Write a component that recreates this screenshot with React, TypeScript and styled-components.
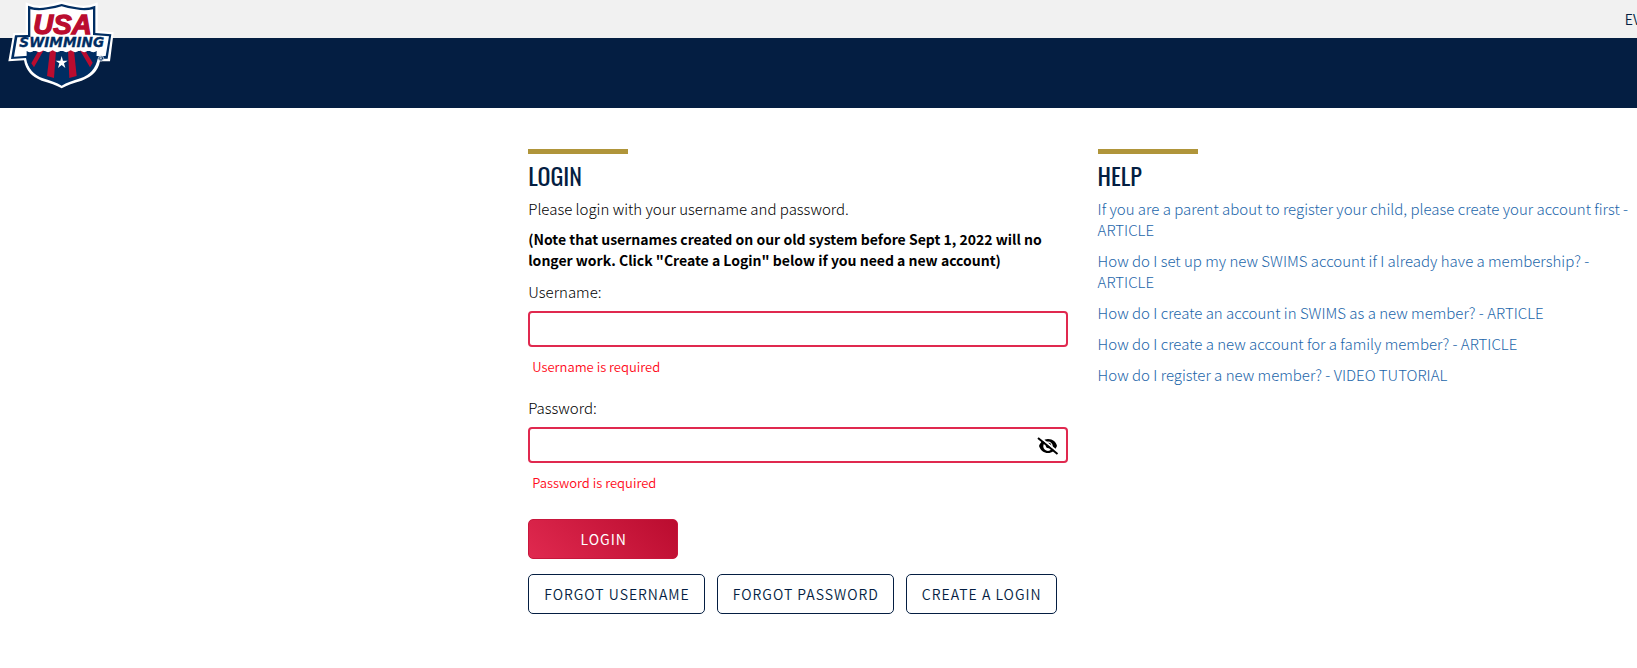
import React, { useState } from "react";
import styled, { createGlobalStyle } from "styled-components";

const navy = "#041e42";
const gold = "#b0953a";
const crimson = "#e0294f";

const GlobalStyle = createGlobalStyle`
  *, *::before, *::after { box-sizing: border-box; }
  body {
    margin: 0;
    background: #fff;
    color: #000;
    font-family: "Source Sans Pro", "Noto Sans CJK SC", sans-serif;
    font-size: 15px;
    font-weight: 300;
    line-height: 21px;
  }
`;

const Header = styled.header`
  position: relative;
`;

const TopBar = styled.div`
  display: flex;
  align-items: center;
  justify-content: flex-end;
  height: 38px;
  overflow: hidden;
  background: #f1f1f1;
`;

const TopLink = styled.a`
  margin-right: -4px;
  color: ${navy};
  font-size: 14px;
  font-weight: 350;
  white-space: nowrap;
  text-decoration: none;
`;

const NavBar = styled.div`
  height: 70px;
  background: ${navy};
`;

const LogoLink = styled.a`
  position: absolute;
  top: 1px;
  left: 8px;
  line-height: 0;
`;

const Main = styled.main`
  display: grid;
  grid-template-columns: minmax(0, 1fr) minmax(0, 1fr);
  gap: 30px;
  padding: 41px 0 40px calc(33% - 12px);
`;

const Heading = styled.h1`
  margin: 0 0 5px;
  color: ${navy};
  font-family: Oswald, "Liberation Sans", sans-serif;
  font-size: 24px;
  font-weight: 400;
  line-height: 36px;

  &::before {
    content: "";
    display: block;
    width: 100px;
    height: 5px;
    margin-bottom: 3px;
    background: ${gold};
  }
`;

const Paragraph = styled.p`
  margin: 0 0 10px;
`;

const Note = styled(Paragraph)`
  font-size: 14px;
  font-weight: 700;
`;

const Field = styled.div`
  margin-bottom: 20px;
`;

const Label = styled.label`
  display: block;
  margin-bottom: 9px;
`;

const InputWrap = styled.div`
  position: relative;
`;

const Input = styled.input`
  display: block;
  width: 100%;
  height: 36px;
  padding: 0 40px 0 12px;
  border: 2px solid ${crimson};
  border-radius: 4px;
  background: #fff;
  font: inherit;
  outline: none;
`;

const Toggle = styled.button`
  position: absolute;
  top: 8px;
  right: 9px;
  width: 22px;
  height: 22px;
  padding: 0;
  border: 0;
  background: none;
  line-height: 0;
  cursor: pointer;
`;

const ErrorText = styled.div`
  padding: 10px 4px 0;
  color: #ff0a20;
  font-size: 13px;
  font-weight: 350;
  line-height: 20px;
`;

const Button = styled.button`
  height: 40px;
  padding: 0 14px 0 15px;
  border: 1px solid ${navy};
  border-radius: 5px;
  background: #fff;
  color: ${navy};
  font: inherit;
  font-size: 14px;
  font-weight: 350;
  letter-spacing: 1px;
  text-transform: uppercase;
  white-space: nowrap;
  cursor: pointer;
`;

const PrimaryButton = styled(Button)`
  width: 150px;
  border-color: #c8163c;
  background: linear-gradient(45deg, #e0294f, #ba0c2f);
  color: #fff;
  font-weight: 400;
`;

const Actions = styled.div`
  padding-top: 6px;
`;

const ButtonRow = styled.div`
  display: flex;
  flex-wrap: wrap;
  gap: 12px;
  margin-top: 15px;
`;

const HelpList = styled.ul`
  margin: 0;
  padding: 0;
  list-style: none;
`;

const HelpItem = styled.li`
  margin-bottom: 10px;
`;

const HelpLink = styled.a`
  color: #1c66aa;
  text-decoration: none;
`;

function Logo() {
  return (
    <svg width="106" height="88" viewBox="24 3 318 264" role="img" aria-label="USA Swimming">
      <path
        d="M77 7 Q108 22 138 15 Q165 10 185 4 Q205 10 232 15 Q262 22 293 7 V93 L341 97 L330 184 L300 184 Q292 226 245 242 Q208 252 185 265 Q162 252 125 242 Q80 226 72 181 L25 184 L40 99 L77 98 Z"
        fill="#fff"
      />
      <path
        d="M84 17 Q110 28 140 22 Q167 18 185 12 Q203 18 230 22 Q260 28 286 17 V99 L334 103 L323 176 L293 176 Q284 220 241 235 Q207 245 185 257 Q163 245 129 235 Q86 220 78 174 L33 177 L45 106 L84 105 Z"
        fill="#002d62"
      />
      <path
        d="M91 28 Q116 34 143 28 Q168 25 185 19 Q202 25 227 28 Q254 34 279 28 V105 L327 109 L317 168 L286 168 L284 154 H88 L84 167 L42 170 L52 112 L91 111 Z"
        fill="#fff"
      />
      <path d="M80 153 H290 Q292 218 238 231 Q207 240 185 250 Q163 240 132 231 Q76 217 80 153 Z" fill="#002d62" />
      <g fill="#ba0c2f">
        <path d="M116 151 L131 151 L102 202 L94 190 Z" />
        <path d="M150 151 L168 151 L162 234 L141 228 Z" />
        <path d="M204 151 L222 151 L230 228 L208 234 Z" />
        <path d="M240 151 L255 151 L278 188 L270 202 Z" />
      </g>
      <path
        d="M78 143 H292 V151 Q280 163 266 150 Q253 163 239 150 Q226 163 212 150 Q199 163 185 150 Q171 163 158 150 Q144 163 131 150 Q117 163 104 150 Q90 163 78 151 Z"
        fill="#fff"
      />
      <path d="M185 168 L189 182 H203 L192 190 L196 204 L185 195 L174 204 L178 190 L167 182 H181 Z" fill="#fff" />
      <text
        x="100"
        y="103"
        fill="#ba0c2f"
        stroke="#ba0c2f"
        strokeWidth="4"
        fontFamily="Liberation Sans, Arial, sans-serif"
        fontSize="83"
        fontWeight="700"
        fontStyle="italic"
      >
        USA
      </text>
      <text
        x="58"
        y="141"
        fill="#002d62"
        stroke="#002d62"
        strokeWidth="1"
        fontFamily="DejaVu Sans, sans-serif"
        fontSize="41"
        fontWeight="700"
        fontStyle="italic"
      >
        SWIMMING
      </text>
      <circle cx="303" cy="175" r="8" fill="#002d62" stroke="#fff" strokeWidth="2" />
      <path d="M300 180 V170 H304 Q307 173 304 175 H300 M304 175 L307 180" fill="none" stroke="#fff" strokeWidth="2" />
    </svg>
  );
}

function EyeOff() {
  return (
    <svg width="22" height="22" viewBox="0 0 22 22" aria-hidden="true">
      <path
        fillRule="evenodd"
        d="M11 4 C16 4 19 7 20 11 C18 15.500 15 18 11 18 C7 18 3.500 15.500 2 11 C3.500 7 7 4 11 4 Z M11 6.500 A4.700 4.700 0 1 0 11 16 A4.700 4.700 0 1 0 11 6.500 Z"
      />
      <circle cx="11.500" cy="10.500" r="2.700" />
      <path d="M2.500 2 L21.500 17.500" stroke="#fff" strokeWidth="2" />
      <path d="M1 3 L20.500 19" stroke="#000" strokeWidth="2" />
    </svg>
  );
}

const articles = [
  "If you are a parent about to register your child, please create your account first - ARTICLE",
  "How do I set up my new SWIMS account if I already have a membership? - ARTICLE",
  "How do I create an account in SWIMS as a new member? - ARTICLE",
  "How do I create a new account for a family member? - ARTICLE",
  "How do I register a new member? - VIDEO TUTORIAL",
];

export default function App() {
  const [visible, setVisible] = useState(false);

  return (
    <>
      <GlobalStyle />
      <Header>
        <TopBar>
          <TopLink href="#events">EV</TopLink>
        </TopBar>
        <NavBar />
        <LogoLink href="#home">
          <Logo />
        </LogoLink>
      </Header>
      <Main>
        <form onSubmit={(event) => event.preventDefault()}>
          <Heading>LOGIN</Heading>
          <Paragraph>Please login with your username and password.</Paragraph>
          <Note>
            (Note that usernames created on our old system before Sept 1, 2022 will no longer work. Click "Create a
            Login" below if you need a new account)
          </Note>
          <Field>
            <Label htmlFor="username">Username:</Label>
            <Input id="username" type="text" aria-invalid="true" aria-describedby="username-error" />
            <ErrorText id="username-error">Username is required</ErrorText>
          </Field>
          <Field>
            <Label htmlFor="password">Password:</Label>
            <InputWrap>
              <Input
                id="password"
                type={visible ? "text" : "password"}
                aria-invalid="true"
                aria-describedby="password-error"
              />
              <Toggle type="button" aria-label="Show password" onClick={() => setVisible(!visible)}>
                <EyeOff />
              </Toggle>
            </InputWrap>
            <ErrorText id="password-error">Password is required</ErrorText>
          </Field>
          <Actions>
            <PrimaryButton type="submit">Login</PrimaryButton>
            <ButtonRow>
              <Button type="button">Forgot Username</Button>
              <Button type="button">Forgot Password</Button>
              <Button type="button">Create a Login</Button>
            </ButtonRow>
          </Actions>
        </form>
        <section>
          <Heading as="h2">HELP</Heading>
          <HelpList>
            {articles.map((article) => (
              <HelpItem key={article}>
                <HelpLink href="#article">{article}</HelpLink>
              </HelpItem>
            ))}
          </HelpList>
        </section>
      </Main>
    </>
  );
}
